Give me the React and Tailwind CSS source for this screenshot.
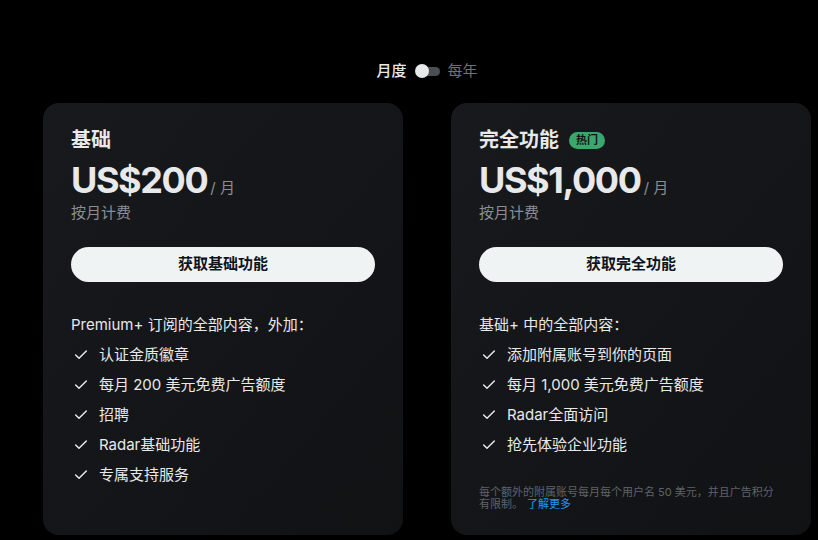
import { Check } from 'lucide-react';

const plans = [
  {
    name: '基础',
    price: 'US$200',
    cta: '获取基础功能',
    intro: 'Premium+ 订阅的全部内容，外加：',
    features: ['认证金质徽章', '每月 200 美元免费广告额度', '招聘', 'Radar基础功能', '专属支持服务'],
  },
  {
    name: '完全功能',
    badge: '热门',
    price: 'US$1,000',
    cta: '获取完全功能',
    intro: '基础+ 中的全部内容：',
    features: ['添加附属账号到你的页面', '每月 1,000 美元免费广告额度', 'Radar全面访问', '抢先体验企业功能'],
    note: true,
  },
];

const PlanCard = ({ plan }) => (
  <div className="w-[360px] h-[432px] rounded-[16px] bg-gradient-to-br from-[#18191c] to-[#111214] px-[28px] pt-[23px] flex flex-col">
    <div className="flex items-center gap-[10px] h-[28px]">
      <h2 className="text-[20px] font-bold text-[#e7e9ea]">{plan.name}</h2>
      {plan.badge && (
        <span className="bg-[#3aa76d] text-[#0f1419] text-[11px] font-bold rounded-full px-[7px] h-[17px] leading-[17px]">
          {plan.badge}
        </span>
      )}
    </div>
    <div className="flex items-baseline mt-[4px] h-[44px]">
      <span className="text-[36px] font-bold text-[#e7e9ea] leading-[44px] tracking-[-1.4px]">{plan.price}</span>
      <span className="text-[15px] text-[#8b8f94] ml-[3px]">/ 月</span>
    </div>
    <div className="text-[15px] text-[#8b8f94] leading-[22px]">按月计费</div>
    <button className="mt-[23px] h-[35px] w-full rounded-full bg-[#eff3f4] text-[#0f1419] text-[15px] font-bold">
      {plan.cta}
    </button>
    <div className="mt-[32px] text-[15px] text-[#e7e9ea] leading-[22px]">{plan.intro}</div>
    <ul className="mt-[4px] flex flex-col">
      {plan.features.map((f) => (
        <li key={f} className="flex items-center h-[30px] text-[15px] text-[#e7e9ea]">
          <Check size={16} strokeWidth={2.2} className="ml-[2px] mr-[10px] text-[#e7e9ea]" />
          {f}
        </li>
      ))}
    </ul>
    {plan.note && (
      <div className="mt-[26px] text-[11px] leading-[12px] text-[#5f6368] flex flex-col">
        <span>每个额外的附属账号每月每个用户名 50 美元，并且广告积分</span>
        <span className="flex gap-[4px]">
          <span>有限制。</span>
          <span className="text-[#1d9bf0]">了解更多</span>
        </span>
      </div>
    )}
  </div>
);

export default function App() {
  return (
    <div
      className="w-[818px] h-[540px] bg-black overflow-hidden"
      style={{ fontFamily: 'Inter, "Noto Sans CJK SC", sans-serif' }}
    >
      <div className="flex items-center justify-center pt-[61px] h-[81px] gap-[8px] ml-[36px]">
        <span className="text-[15px] text-[#e7e9ea] font-medium">月度</span>
        <div className="relative w-[25px] h-[14px] flex items-center">
          <div className="absolute left-[4px] right-0 h-[9px] rounded-full bg-[#4b4e52]" />
          <div className="absolute left-0 w-[14px] h-[14px] rounded-full bg-[#e7e9ea]" />
        </div>
        <span className="text-[15px] text-[#6e7276]">每年</span>
      </div>
      <div className="flex gap-[48px] pl-[43px] mt-[22px]">
        {plans.map((p) => (
          <PlanCard key={p.name} plan={p} />
        ))}
      </div>
    </div>
  );
}
